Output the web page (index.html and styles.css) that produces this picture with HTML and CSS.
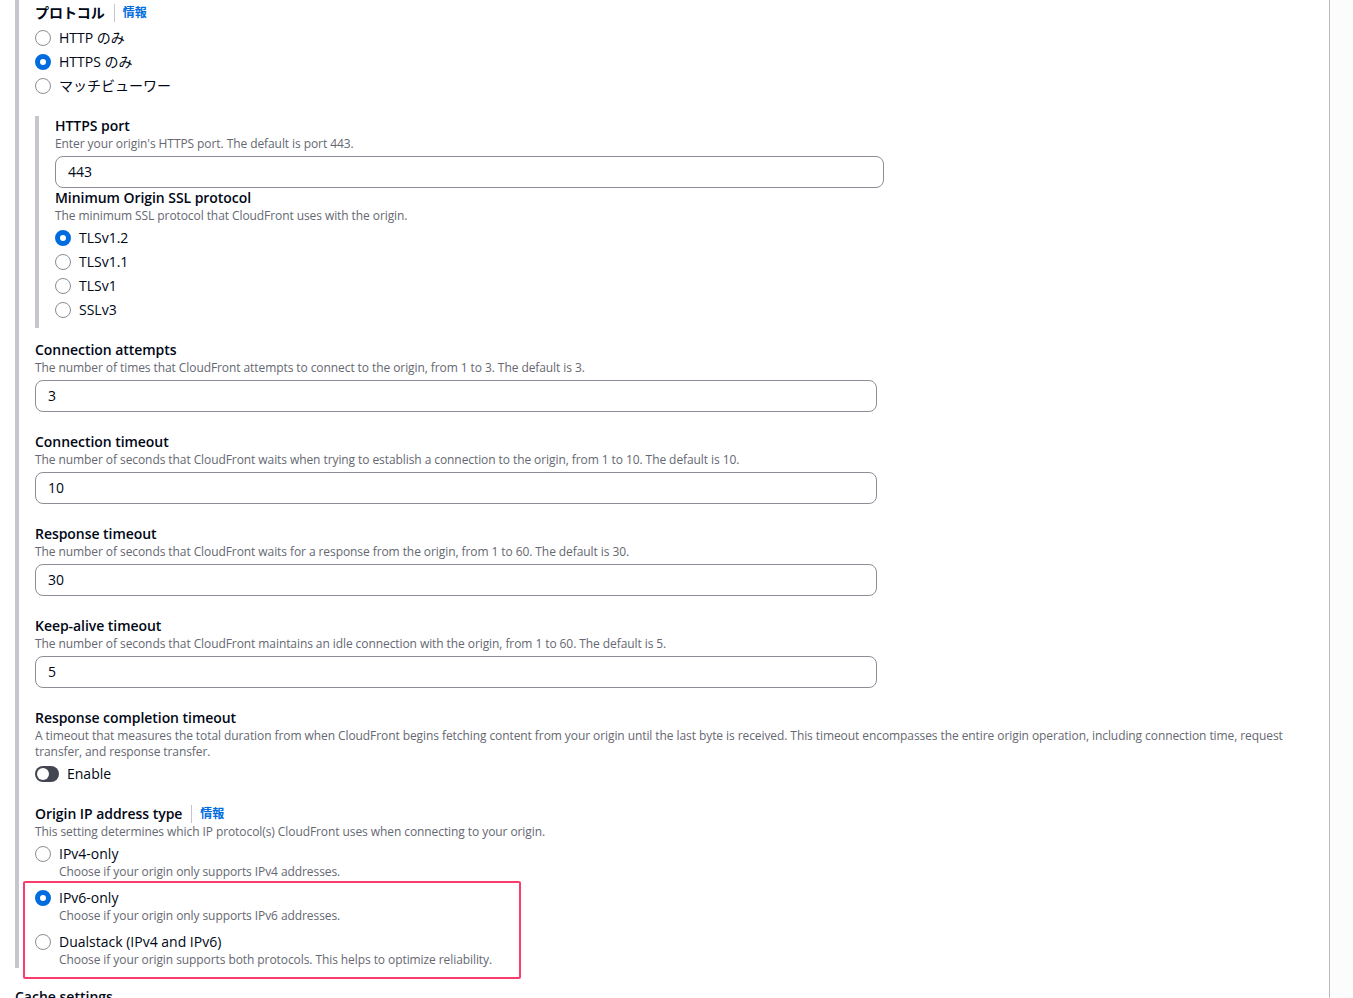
FILE: index.html
```html
<!DOCTYPE html>
<html lang="ja">
<head>
<meta charset="utf-8">
<title>Origin settings</title>
<link rel="stylesheet" href="styles.css">
</head>
<body>
<div class="page">
  <main class="main">
    <div class="section">
      <div class="label-row">
        <span class="label">プロトコル</span>
        <span class="info">情報</span>
      </div>
      <div class="radios radios-top">
        <div class="radio"><span class="dot"></span><span class="rtext">HTTP のみ</span></div>
        <div class="radio"><span class="dot on"></span><span class="rtext">HTTPS のみ</span></div>
        <div class="radio"><span class="dot"></span><span class="rtext">マッチビューワー</span></div>
      </div>

      <div class="nested">
        <div class="label">HTTPS port</div>
        <div class="desc">Enter your origin's HTTPS port. The default is port 443.</div>
        <div class="input input-nested">443</div>
        <div class="label">Minimum Origin SSL protocol</div>
        <div class="desc">The minimum SSL protocol that CloudFront uses with the origin.</div>
        <div class="radios radios-ssl">
          <div class="radio"><span class="dot on"></span><span class="rtext">TLSv1.2</span></div>
          <div class="radio"><span class="dot"></span><span class="rtext">TLSv1.1</span></div>
          <div class="radio"><span class="dot"></span><span class="rtext">TLSv1</span></div>
          <div class="radio"><span class="dot"></span><span class="rtext">SSLv3</span></div>
        </div>
      </div>

      <div class="fields">
        <div class="field">
          <div class="label">Connection attempts</div>
          <div class="desc">The number of times that CloudFront attempts to connect to the origin, from 1 to 3. The default is 3.</div>
          <div class="input">3</div>
        </div>
        <div class="field">
          <div class="label">Connection timeout</div>
          <div class="desc">The number of seconds that CloudFront waits when trying to establish a connection to the origin, from 1 to 10. The default is 10.</div>
          <div class="input">10</div>
        </div>
        <div class="field">
          <div class="label">Response timeout</div>
          <div class="desc">The number of seconds that CloudFront waits for a response from the origin, from 1 to 60. The default is 30.</div>
          <div class="input">30</div>
        </div>
        <div class="field">
          <div class="label">Keep-alive timeout</div>
          <div class="desc">The number of seconds that CloudFront maintains an idle connection with the origin, from 1 to 60. The default is 5.</div>
          <div class="input">5</div>
        </div>
        <div class="field">
          <div class="label">Response completion timeout</div>
          <div class="desc">A timeout that measures the total duration from when CloudFront begins fetching content from your origin until the last byte is received. This timeout encompasses the entire origin operation, including connection time, request transfer, and response transfer.</div>
          <div class="toggle-row"><span class="toggle"><span class="knob"></span></span><span class="rtext">Enable</span></div>
        </div>
        <div class="field">
          <div class="label-row">
            <span class="label">Origin IP address type</span>
            <span class="info">情報</span>
          </div>
          <div class="desc">This setting determines which IP protocol(s) CloudFront uses when connecting to your origin.</div>
          <div class="options">
            <div class="option">
              <div class="radio radio-d"><span class="dot"></span><span class="rtext">IPv4-only</span></div>
              <div class="desc odesc">Choose if your origin only supports IPv4 addresses.</div>
            </div>
            <div class="highlight">
              <div class="option">
                <div class="radio radio-d"><span class="dot on"></span><span class="rtext">IPv6-only</span></div>
                <div class="desc odesc">Choose if your origin only supports IPv6 addresses.</div>
              </div>
              <div class="option">
                <div class="radio radio-d"><span class="dot"></span><span class="rtext">Dualstack (IPv4 and IPv6)</span></div>
                <div class="desc odesc">Choose if your origin supports both protocols. This helps to optimize reliability.</div>
              </div>
            </div>
          </div>
        </div>
      </div>
    </div>
    <h2 class="next-heading">Cache settings</h2>
  </main>
  <aside class="aside"></aside>
</div>
</body>
</html>
```

FILE: styles.css
```css
html, body {
  margin: 0;
  padding: 0;
  background: #ffffff;
}
body {
  font-family: "Open Sans", "Noto Sans CJK JP", sans-serif;
  color: #000716;
  overflow: hidden;
}
.page {
  display: flex;
  height: 998px;
}
.main {
  width: 1329px;
  flex: none;
}
.aside {
  flex: 1;
  border-left: 1px solid #b9b9c0;
  background: #fcfcfc;
}
.section {
  margin-left: 15px;
  border-left: 4px solid #c6c6cd;
  padding: 3px 24px 0 16px;
}
.label-row {
  display: flex;
  align-items: center;
  height: 20px;
}
.label {
  font-size: 14px;
  font-weight: 600;
  line-height: 20px;
  letter-spacing: -0.05px;
}
.info {
  font-size: 12px;
  font-weight: 700;
  line-height: 18px;
  color: #006ce0;
  margin-left: 9px;
  padding-left: 8px;
  border-left: 1px solid #c6c6cd;
}
.desc {
  font-size: 12px;
  line-height: 16px;
  color: #656871;
  letter-spacing: -0.08px;
}
.radios {
  display: flex;
  flex-direction: column;
}
.radios-top {
  margin-top: 3px;
}
.radios-ssl {
  margin-top: 2px;
}
.radio {
  display: flex;
  align-items: center;
  height: 24px;
}
.radio-d {
  height: 20px;
}
.dot {
  width: 16px;
  height: 16px;
  box-sizing: border-box;
  border-radius: 50%;
  border: 1.5px solid #8c8c94;
  background: #ffffff;
  flex: none;
  margin-right: 8px;
}
.dot.on {
  border: 5px solid #006ce0;
}
.rtext {
  font-size: 14px;
  line-height: 20px;
}
.nested {
  margin-top: 18px;
  border-left: 4px solid #c6c6cd;
  padding: 0 0 6px 16px;
}
.input {
  box-sizing: border-box;
  height: 32px;
  width: 842px;
  margin-top: 4px;
  border: 1px solid #8c8c94;
  border-radius: 8px;
  padding: 0 12px;
  font-size: 14px;
  line-height: 30px;
  color: #000716;
}
.input-nested {
  width: 829px;
}
.fields {
  margin-top: 12px;
  display: flex;
  flex-direction: column;
  gap: 20px;
}
.toggle-row {
  display: flex;
  align-items: center;
  height: 20px;
  margin-top: 4px;
}
.toggle {
  width: 24px;
  height: 16px;
  border-radius: 8px;
  background: #424650;
  flex: none;
  margin-right: 8px;
  display: flex;
  align-items: center;
  padding-left: 2px;
  box-sizing: border-box;
}
.knob {
  width: 12px;
  height: 12px;
  border-radius: 50%;
  background: #ffffff;
}
.options {
  margin-top: 4px;
  display: flex;
  flex-direction: column;
  gap: 8px;
}
.odesc {
  padding-left: 24px;
}
.highlight {
  position: relative;
  display: flex;
  flex-direction: column;
  gap: 8px;
}
.highlight::after {
  content: "";
  position: absolute;
  left: -12px;
  top: -7px;
  width: 498px;
  height: 98px;
  box-sizing: border-box;
  border: 2px solid #fb3a6d;
  border-radius: 2px;
  pointer-events: none;
}
.next-heading {
  margin: 19px 0 0 15px;
  font-size: 14px;
  font-weight: 600;
  line-height: 20px;
}
```
